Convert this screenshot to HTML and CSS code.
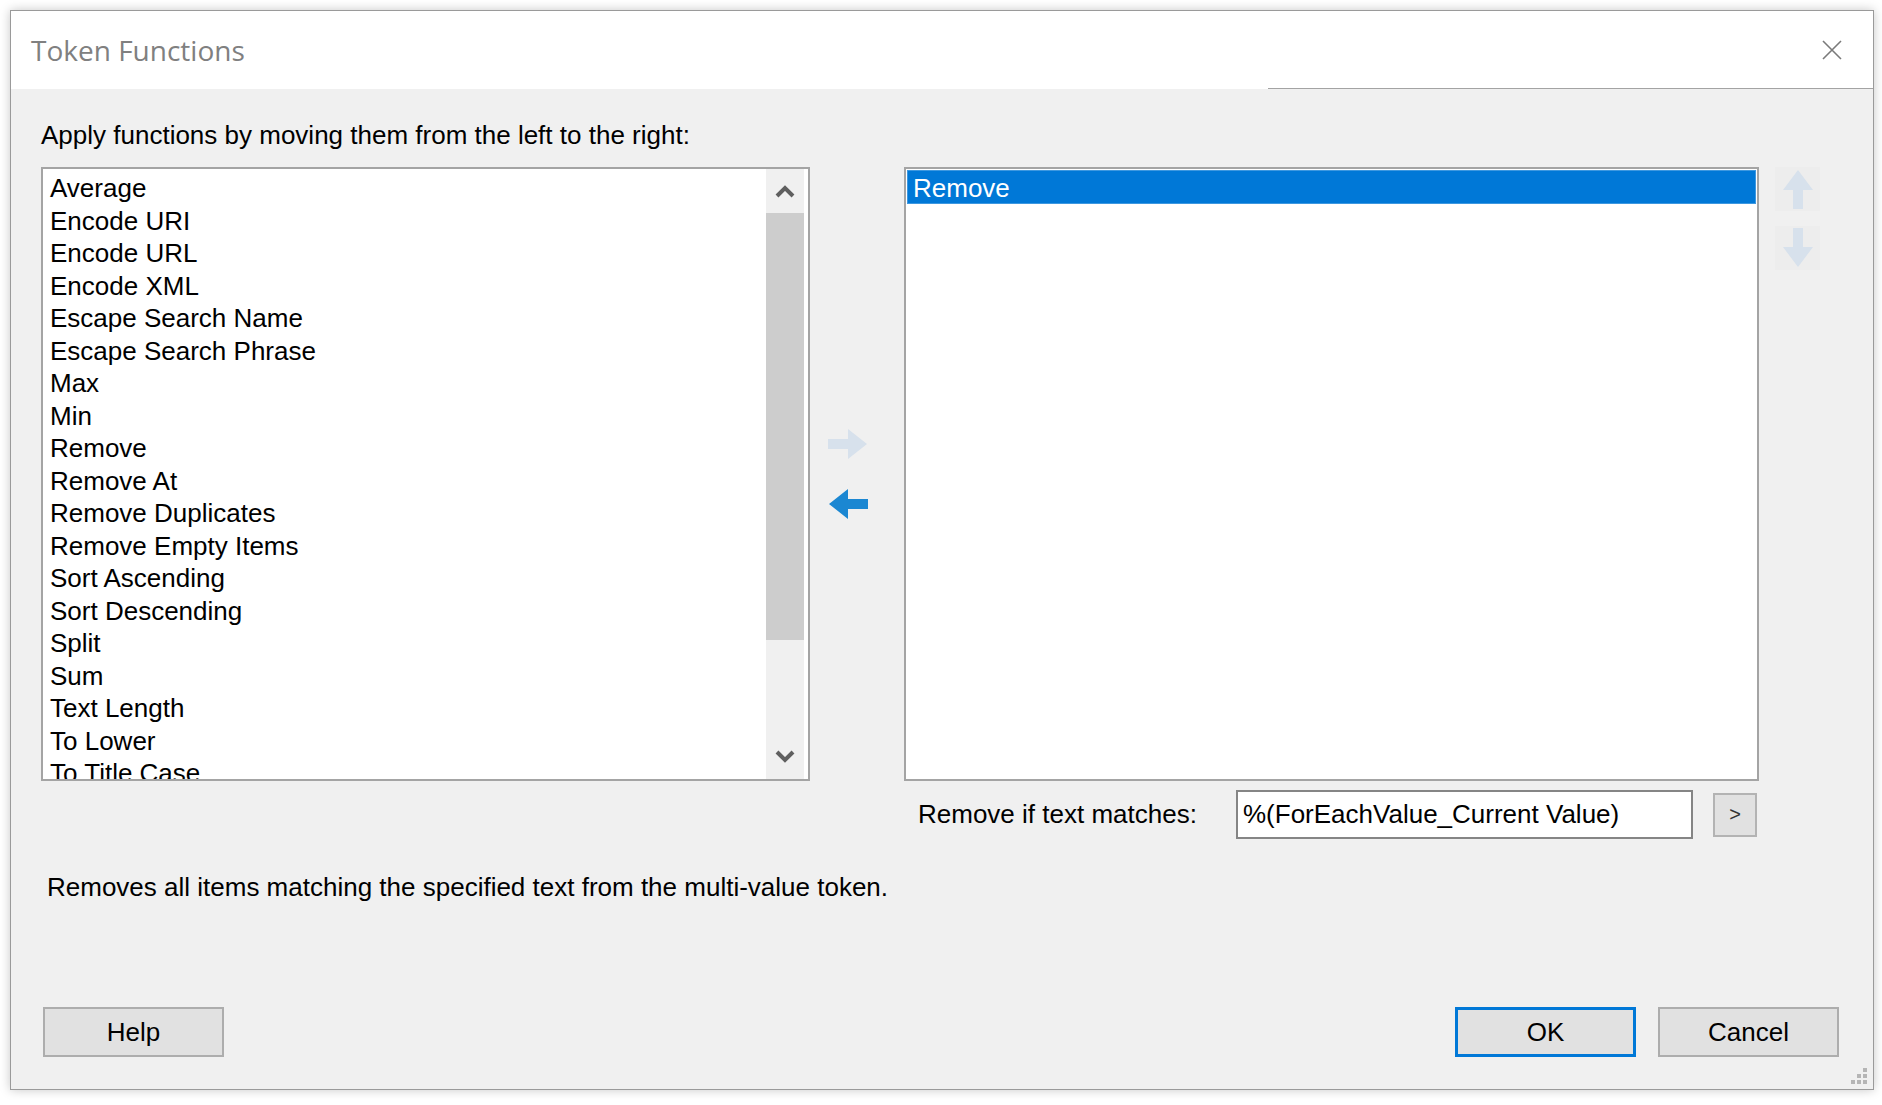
FILE: index.html
```html
<!DOCTYPE html>
<html lang="en">
<head>
    <meta charset="UTF-8">
    <title>Token Functions</title>
    <link rel="stylesheet" href="styles.css">
</head>
<body>
    <div class="window">
        <div class="titlebar">
            <span class="title">Token Functions</span>
            <svg class="close" width="20" height="20" viewBox="0 0 20 20">
                <path d="M1 1L19 19M19 1L1 19" stroke="#7a7a7a" stroke-width="1.6" fill="none"/>
            </svg>
        </div>

        <div class="content">
            <div class="hint">Apply functions by moving them from the left to the right:</div>

            <div class="picker">
                <!-- available functions -->
                <div class="listbox">
                    <ul class="items">
                        <li>Average</li>
                        <li>Encode URI</li>
                        <li>Encode URL</li>
                        <li>Encode XML</li>
                        <li>Escape Search Name</li>
                        <li>Escape Search Phrase</li>
                        <li>Max</li>
                        <li>Min</li>
                        <li>Remove</li>
                        <li>Remove At</li>
                        <li>Remove Duplicates</li>
                        <li>Remove Empty Items</li>
                        <li>Sort Ascending</li>
                        <li>Sort Descending</li>
                        <li>Split</li>
                        <li>Sum</li>
                        <li>Text Length</li>
                        <li>To Lower</li>
                        <li>To Title Case</li>
                    </ul>
                    <div class="vscroll">
                        <div class="scroll-btn">
                            <svg width="20" height="14" viewBox="0 0 20 14"><path d="M2 12L10 4L18 12" stroke="#5f5f5f" stroke-width="4" fill="none"/></svg>
                        </div>
                        <div class="scroll-thumb"></div>
                        <div class="scroll-track"></div>
                        <div class="scroll-btn">
                            <svg width="20" height="14" viewBox="0 0 20 14"><path d="M2 2L10 10L18 2" stroke="#5f5f5f" stroke-width="4" fill="none"/></svg>
                        </div>
                    </div>
                </div>

                <!-- move buttons -->
                <div class="movers">
                    <svg width="40" height="32" viewBox="0 0 40 32"><path d="M0 11H20V1L39 16L20 31V21H0Z" fill="#d7e1ec"/></svg>
                    <svg width="40" height="32" viewBox="0 0 40 32"><path d="M40 11H20V1L1 16L20 31V21H40Z" fill="#1b87d2"/></svg>
                </div>

                <!-- applied functions -->
                <div class="listbox applied">
                    <ul class="items">
                        <li class="selected">Remove</li>
                    </ul>
                </div>

                <div class="order">
                    <div class="order-btn">
                        <svg width="32" height="40" viewBox="0 0 32 40"><path d="M11 40V21H1L16 1L31 21H21V40Z" fill="#d7e1ec"/></svg>
                    </div>
                    <div class="order-btn">
                        <svg width="32" height="40" viewBox="0 0 32 40"><path d="M11 0V19H1L16 39L31 19H21V0Z" fill="#d7e1ec"/></svg>
                    </div>
                </div>

                <div class="options">
                    <label for="match">Remove if text matches:</label>
                    <input id="match" class="textbox" type="text" value="%(ForEachValue_Current Value)">
                    <button class="small-btn">&gt;</button>
                </div>
            </div>

            <div class="description">Removes all items matching the specified text from the multi-value token.</div>

            <div class="footer">
                <button class="btn">Help</button>
                <div class="footer-right">
                    <button class="btn default">OK</button>
                    <button class="btn">Cancel</button>
                </div>
            </div>
        </div>

        <svg class="grip" width="20" height="20" viewBox="0 0 20 20">
            <rect x="14" y="2" width="4" height="4" fill="#b5b5b5"/>
            <rect x="8" y="8" width="4" height="4" fill="#b5b5b5"/>
            <rect x="14" y="8" width="4" height="4" fill="#b5b5b5"/>
            <rect x="2" y="14" width="4" height="4" fill="#b5b5b5"/>
            <rect x="8" y="14" width="4" height="4" fill="#b5b5b5"/>
            <rect x="14" y="14" width="4" height="4" fill="#b5b5b5"/>
        </svg>
    </div>
</body>
</html>
```

FILE: styles.css
```css
body {
    margin: 0;
    padding: 10px;
    background-color: #ffffff;
    font-family: "Liberation Sans", Arial, sans-serif;
    color: #000000;
}

.window {
    position: relative;
    width: 1862px;
    height: 1078px;
    border: 1px solid #9a9a9a;
    background-color: #f0f0f0;
    box-shadow: 0 0 10px rgba(0, 0, 0, 0.22);
    display: flex;
    flex-direction: column;
}

.titlebar {
    height: 78px;
    flex-shrink: 0;
    display: flex;
    align-items: center;
    justify-content: space-between;
    padding: 0 31px 0 20px;
    background:
        linear-gradient(to right, transparent 67.5%, #a3a3a3 67.5%) bottom / 100% 1px no-repeat,
        #ffffff;
}

.title {
    font-family: "Open Sans", "Noto Sans", sans-serif;
    font-size: 28px;
    color: #808080;
}

.content {
    flex: 1;
    display: flex;
    flex-direction: column;
    padding: 31px 34px 32px 30px;
}

.hint {
    font-size: 26px;
    line-height: 30px;
    margin-bottom: 17px;
}

.picker {
    display: grid;
    grid-template-columns: 769px 94px 855px 45px;
    grid-template-rows: 614px auto;
}

.listbox {
    display: flex;
    border: 2px solid #a4a4a4;
    background-color: #ffffff;
    overflow: hidden;
}

.items {
    flex: 1;
    list-style: none;
    margin: 0;
    padding: 3px 0 0 7px;
    font-size: 26px;
    line-height: 32.5px;
    white-space: nowrap;
    overflow: hidden;
}

.vscroll {
    width: 38px;
    margin-right: 4px;
    display: flex;
    flex-direction: column;
    background-color: #f0f0f0;
}

.scroll-btn {
    height: 44px;
    display: flex;
    align-items: center;
    justify-content: center;
}

.scroll-thumb {
    height: 427px;
    background-color: #cdcdcd;
}

.scroll-track {
    flex: 1;
}

.movers {
    display: flex;
    flex-direction: column;
    justify-content: center;
    gap: 28px;
    padding-left: 18px;
}

.applied .items {
    padding: 1px 1px 0 1px;
}

.applied .selected {
    background-color: #0078d7;
    color: #ffffff;
    padding: 2px 0 0 6px;
    height: 32px;
    line-height: 33px;
    box-shadow: inset 0 0 0 1px #3d98e0;
}

.order {
    display: flex;
    flex-direction: column;
    gap: 15px;
    margin-left: 16px;
}

.order-btn {
    width: 45px;
    height: 44px;
    display: flex;
    align-items: center;
    justify-content: center;
    background-color: #ededed;
}

.options {
    grid-column: 3;
    display: flex;
    align-items: center;
    margin-top: 9px;
    padding-left: 14px;
}

.options label {
    flex: 1;
    font-size: 26px;
}

.textbox {
    width: 457px;
    height: 49px;
    box-sizing: border-box;
    border: 2px solid #858585;
    padding: 0 5px;
    font-family: "Liberation Sans", Arial, sans-serif;
    font-size: 26px;
    color: #000000;
    background-color: #ffffff;
    outline: none;
}

.small-btn {
    width: 44px;
    height: 44px;
    margin-left: 20px;
    margin-right: 2px;
    border: 2px solid #b3b3b3;
    background-color: #e1e1e1;
    font-family: "Liberation Sans", Arial, sans-serif;
    font-size: 20px;
    color: #333333;
    padding: 0;
}

.description {
    font-size: 26px;
    line-height: 30px;
    margin-top: 33px;
    padding-left: 6px;
}

.footer {
    margin-top: auto;
    display: flex;
    justify-content: space-between;
    padding-left: 2px;
}

.footer-right {
    display: flex;
    gap: 22px;
}

.btn {
    width: 181px;
    height: 50px;
    border: 2px solid #adadad;
    background-color: #e1e1e1;
    font-family: "Liberation Sans", Arial, sans-serif;
    font-size: 26px;
    color: #000000;
    padding: 0;
}

.btn.default {
    border: 3px solid #0078d7;
}

.grip {
    position: absolute;
    right: 4px;
    bottom: 3px;
}
```
